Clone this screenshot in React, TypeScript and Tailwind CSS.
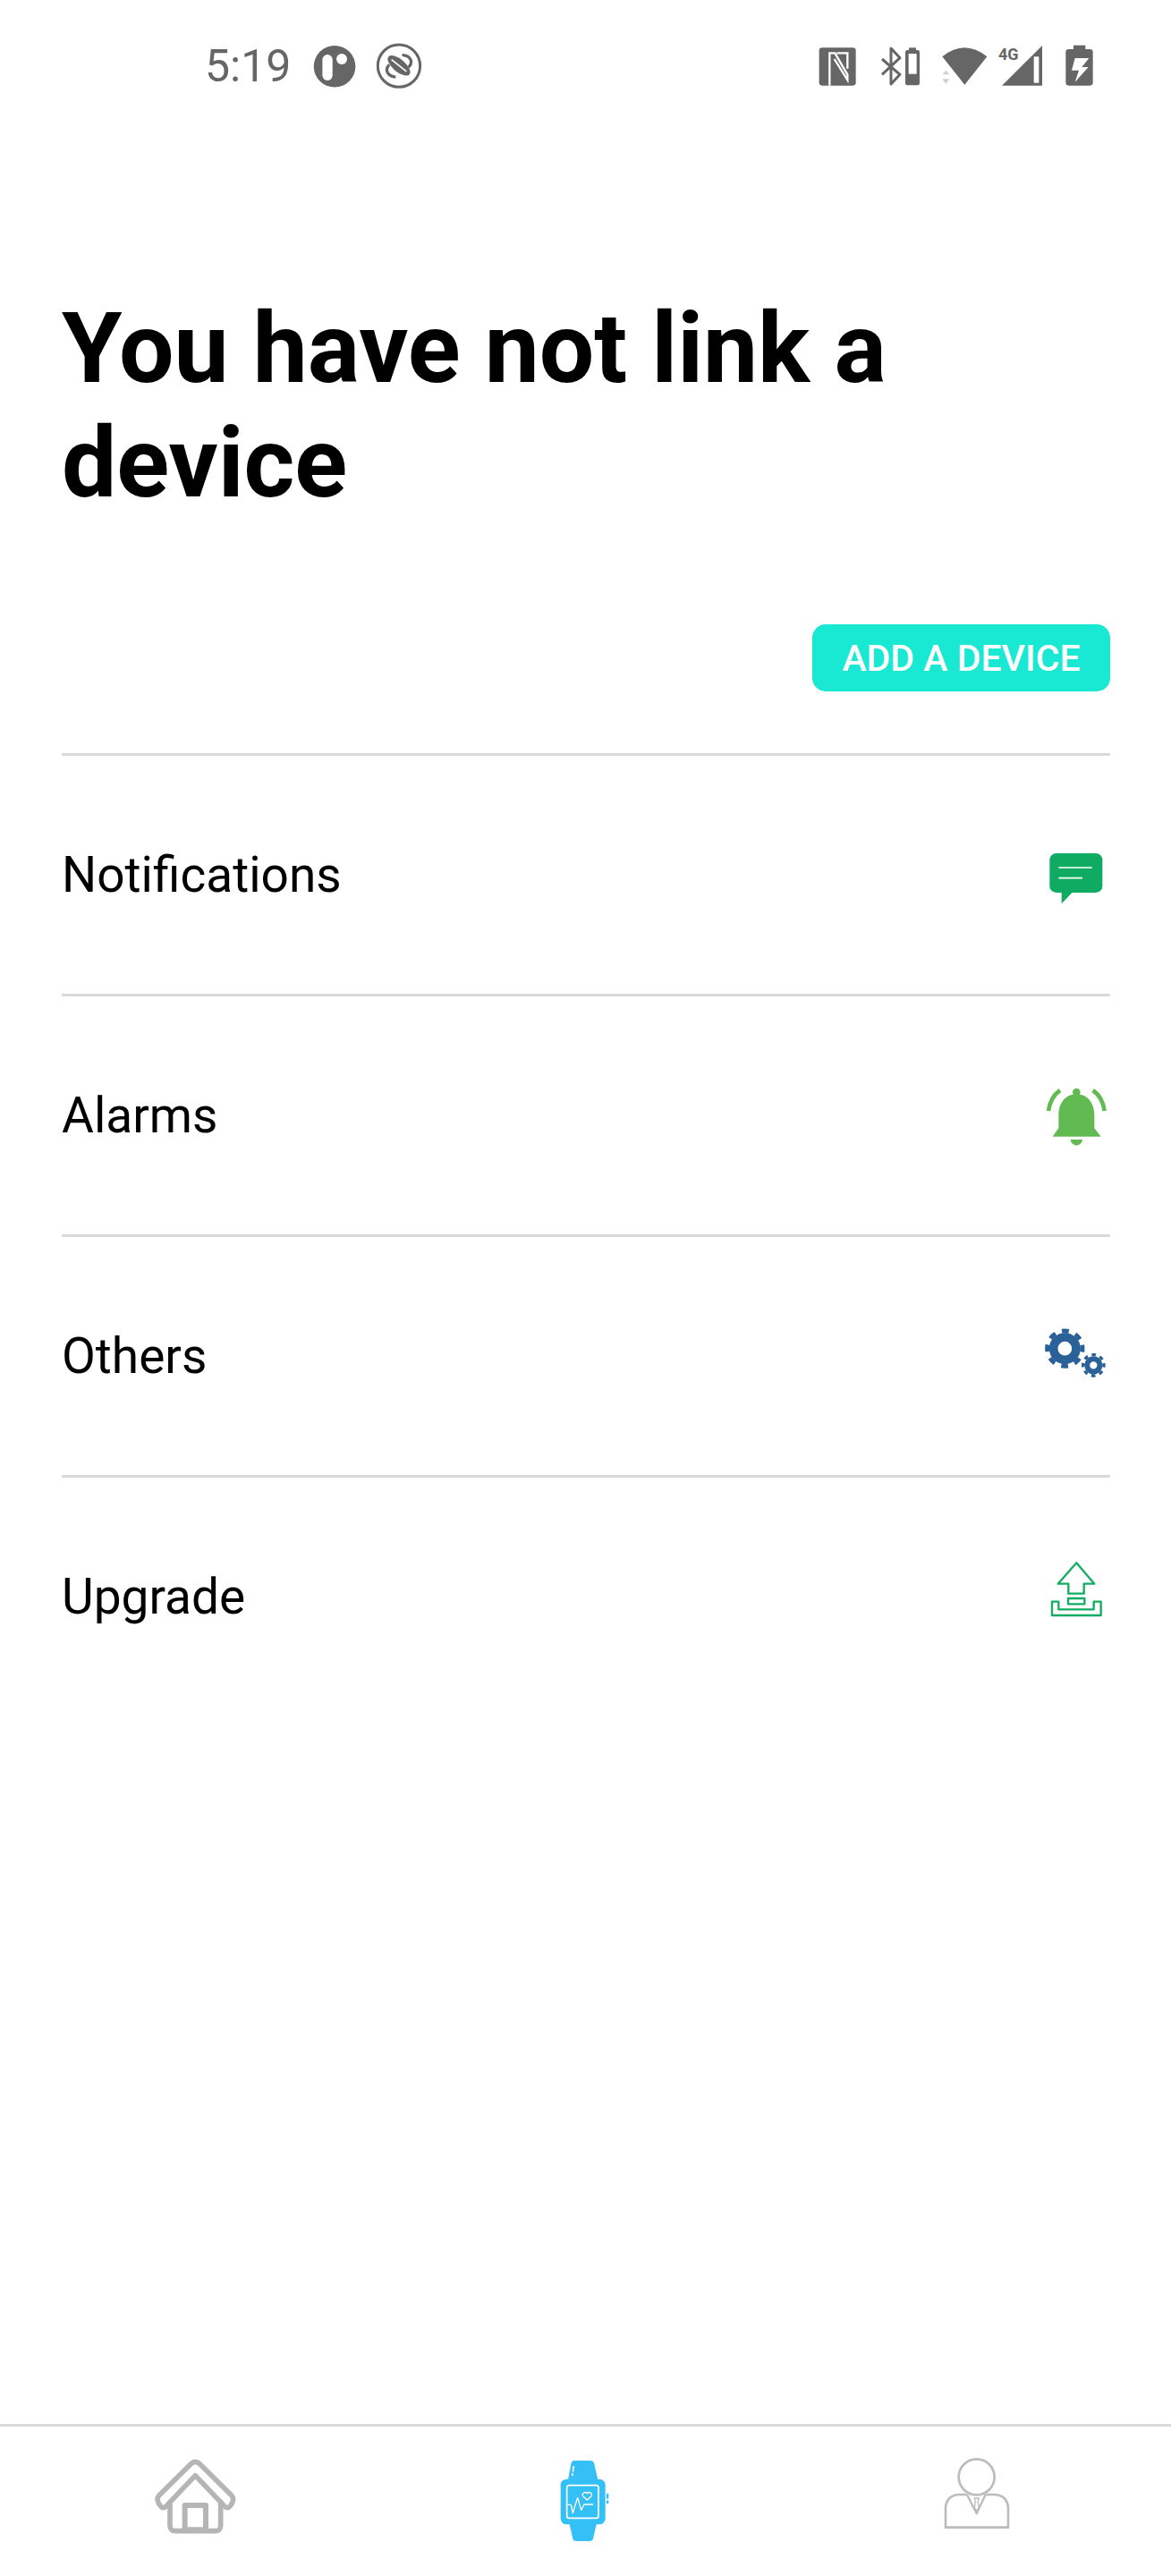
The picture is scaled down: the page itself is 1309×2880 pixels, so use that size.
import React from "react";

const rows = [
  { label: "Notifications", icon: <ChatIcon /> },
  { label: "Alarms", icon: <BellIcon /> },
  { label: "Others", icon: <GearsIcon /> },
  { label: "Upgrade", icon: <UploadIcon /> },
];

function ChatIcon() {
  return (
    <svg viewBox="0 0 303 270" className="w-[101px] h-[90px]">
      <rect x="100" y="63" width="177" height="132" rx="22" fill="#10ab62" />
      <path d="M140 188V232L176 194Z" fill="#10ab62" />
      <path d="M130 111H242M130 146H210" stroke="#fff" strokeWidth="5" />
    </svg>
  );
}

function BellIcon() {
  return (
    <svg viewBox="0 0 303 270" className="w-[101px] h-[90px]">
      <circle cx="190" cy="57" r="13" fill="#62ba52" />
      <path d="M190 64C152 64 130 95 130 135V178L110 206H272L250 178V135C250 95 228 64 190 64Z" fill="#62ba52" />
      <path d="M170 216H210C207 242 173 242 170 216Z" fill="#62ba52" />
      <path d="M135 51C113 66 100 92 96 120M245 51C267 66 280 92 284 120" fill="none" stroke="#62ba52" strokeWidth="14" />
    </svg>
  );
}

function GearsIcon() {
  return (
    <svg viewBox="0 0 303 270" className="w-[101px] h-[90px]">
      <g fill="none" stroke="#2a6199">
        <circle cx="151" cy="110" r="38" strokeWidth="29" />
        <circle cx="151" cy="110" r="59" strokeWidth="15" strokeDasharray="23.17 23.17" transform="rotate(-11.25 151 110)" />
        <circle cx="247" cy="166" r="21.5" strokeWidth="18" />
        <circle cx="247" cy="166" r="35" strokeWidth="10" strokeDasharray="13.74 13.74" transform="rotate(-11.25 247 166)" />
      </g>
    </svg>
  );
}

function UploadIcon() {
  return (
    <svg viewBox="0 0 303 270" className="w-[101px] h-[90px]">
      <g fill="none" stroke="#12ad63" strokeWidth="7" strokeLinejoin="round">
        <path d="M190 22L250 92H215V125H163V92H128Z" />
        <rect x="162" y="141" width="55" height="19" />
        <path d="M108 152H130V178H248V152H272V198H108Z" />
      </g>
    </svg>
  );
}

function HomeIcon() {
  return (
    <svg viewBox="9 0 390 330" className="w-[130px] h-[110px]">
      <g fill="none" stroke="#b5b5b5" strokeWidth="17" strokeLinejoin="round" strokeLinecap="round">
        <path d="M205 64C198 64 193 68 190 71L84 176C74 186 78 200 88 212C94 220 100 220 106 214L205 110L304 214C310 220 316 220 322 212C332 200 336 186 326 176L220 71C217 68 212 64 205 64Z" />
        <path d="M120 200V278C120 290 127 296 138 296H272C283 296 290 290 290 278V200" />
        <rect x="170" y="210" width="70" height="82" strokeWidth="18" />
      </g>
    </svg>
  );
}

function WatchIcon() {
  return (
    <svg viewBox="0 0 330 330" className="w-[110px] h-[110px]">
      <g fill="#34c0f7">
        <path d="M128 60H182C190 60 194 64 196 72L208 124H108L118 72C120 64 122 60 128 60Z" />
        <path d="M112 270H204L192 322C190 328 186 330 180 330H136C130 330 126 328 124 322Z" />
        <rect x="83" y="122" width="150" height="152" rx="20" />
        <rect x="237" y="170" width="7" height="18" rx="3" />
        <rect x="237" y="193" width="7" height="12" rx="3" />
      </g>
      <g fill="none" stroke="#fff" strokeLinejoin="round">
        <path d="M127 78L122 112" strokeWidth="5" strokeDasharray="20 5 9" />
        <rect x="104" y="143" width="106" height="110" rx="8" strokeWidth="5" />
        <path d="M106 208H118L124 236L140 184L152 226L162 207H192" strokeWidth="4" />
        <path d="M172 192L158 179C152 170 166 162 172 170C178 162 192 170 186 179Z" strokeWidth="4" />
      </g>
    </svg>
  );
}

function ProfileIcon() {
  return (
    <svg viewBox="-15 0 390 330" className="w-[130px] h-[110px]">
      <g fill="none" stroke="#bcbcbc" strokeLinejoin="round">
        <circle cx="182" cy="115" r="60" strokeWidth="8" />
        <path d="M150 174H125C96 174 78 192 78 222V284H288V222C288 192 270 174 241 174H212" strokeWidth="8" />
        <path d="M150 174L182 238L212 174" strokeWidth="7" />
        <path d="M174 186H190L186 196L190 218L182 228L175 218L178 196Z" strokeWidth="4" />
      </g>
    </svg>
  );
}

function StatusLeft() {
  return (
    <svg viewBox="440 50 390 170" className="w-[130px] h-[56.6px]">
      <circle cx="521" cy="135" r="70" fill="#666" />
      <path d="M497 112V165" stroke="#fff" strokeWidth="34" strokeLinecap="round" />
      <circle cx="545" cy="110" r="18" fill="#fff" />
      <circle cx="737" cy="133" r="71" fill="none" stroke="#666" strokeWidth="9" />
      <ellipse cx="737" cy="132" rx="46" ry="21" transform="rotate(40 737 132)" fill="#666" />
      <path d="M712 112L762 152" stroke="#fff" strokeWidth="5" />
      <path d="M752 97C775 100 785 118 772 135M722 170C698 165 690 148 702 132" fill="none" stroke="#666" strokeWidth="10" strokeLinecap="round" />
    </svg>
  );
}

function StatusRight() {
  return (
    <svg viewBox="0 0 1050 240" className="w-[350px] h-[80px]">
      <rect x="77" y="70" width="123" height="127" rx="10" fill="#666" />
      <path d="M112 197V88H130L172 160V178L128 108M136 88H172V140" fill="none" stroke="#fff" strokeWidth="7" />
      <path d="M288 108L348 160L318 192V72L348 104L288 160" fill="none" stroke="#666" strokeWidth="9" strokeLinejoin="round" />
      <rect x="366" y="78" width="48" height="118" rx="7" fill="#666" />
      <rect x="378" y="70" width="24" height="12" fill="#666" />
      <rect x="377" y="90" width="27" height="68" fill="#fff" />
      <path d="M490 100Q565 40 640 100L565 194Z" fill="#666" />
      <path d="M490 160H514L502 146ZM490 175H514L502 191Z" fill="#d0d0d0" />
      <path d="M690 197L825 63V197Z" fill="#666" />
      <rect x="797" y="100" width="17" height="88" fill="#fff" />
      <text x="678" y="110" fontSize="54" fontWeight="700" fill="#666" fontFamily="Roboto, sans-serif">4G</text>
      <rect x="904" y="75" width="91" height="122" rx="10" fill="#666" />
      <rect x="930" y="62" width="40" height="16" fill="#666" />
      <path d="M935 105H982L958 135H980L935 185L948 146H924Z" fill="#fff" />
    </svg>
  );
}

export default function App() {
  return (
    <div className="h-screen flex flex-col bg-white font-['Roboto',sans-serif] text-black">
      {/* status bar */}
      <div className="h-[110px] pt-[30px] flex shrink-0">
        <div className="flex items-center ml-[229px] h-[88px]">
          <span className="text-[50px] leading-none text-[#666] w-[118px]">5:19</span>
          <StatusLeft />
        </div>
        <div className="ml-auto mr-[69px]">
          <StatusRight />
        </div>
      </div>

      <div className="pl-[69px] pr-[68px] flex flex-col">
        <h1 className="mt-[216px] text-[109px] leading-[128px] font-bold">
          You have not link a device
        </h1>
        <div className="flex justify-end mt-[116px]">
          <button className="w-[333px] h-[75px] pt-[3px] rounded-[15px] bg-[#19e8d2] text-white text-[41px] font-medium">
            ADD A DEVICE
          </button>
        </div>

        <div className="mt-[69px]">
          {rows.map((row) => (
            <div
              key={row.label}
              className="h-[269px] border-t-[3px] border-[#d9d9d9] flex items-center justify-between"
            >
              <span className="text-[55px]">{row.label}</span>
              {row.icon}
            </div>
          ))}
        </div>
      </div>

      {/* bottom nav */}
      <div className="mt-auto h-[170px] pb-[22px] border-t-[3px] border-[#d9d9d9] grid grid-cols-3 justify-items-center items-center shrink-0">
        <HomeIcon />
        <WatchIcon />
        <ProfileIcon />
      </div>
    </div>
  );
}
